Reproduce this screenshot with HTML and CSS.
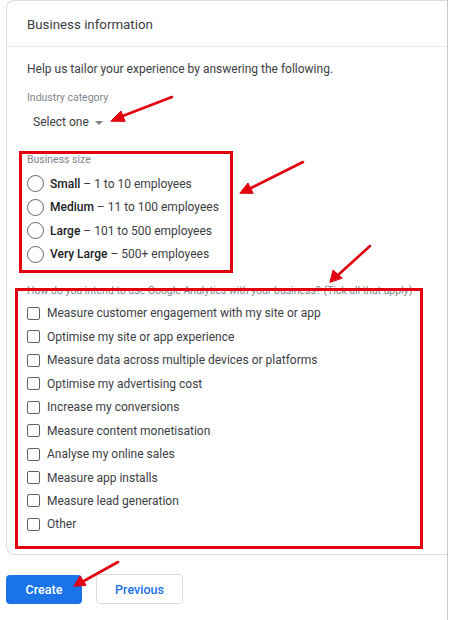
FILE: index.html
```html
<!DOCTYPE html>
<html>
<head>
<meta charset="utf-8">
<link rel="stylesheet" href="styles.css">
</head>
<body>
<div class="page">
  <div class="card">
    <div class="card-head">Business information</div>
    <div class="card-body">
      <p class="intro">Help us tailor your experience by answering the following.</p>
      <div class="field-label">Industry category</div>
      <div class="select">Select one <span class="caret"></span></div>

      <div class="field-label size-label">Business size</div>
      <div class="radios">
        <div class="opt"><span class="radio"></span><span><b>Small</b> – 1 to 10 employees</span></div>
        <div class="opt"><span class="radio"></span><span><b>Medium</b> – 11 to 100 employees</span></div>
        <div class="opt"><span class="radio"></span><span><b>Large</b> – 101 to 500 employees</span></div>
        <div class="opt"><span class="radio"></span><span><b>Very Large</b> – 500+ employees</span></div>
      </div>

      <div class="field-label use-label">How do you intend to use Google Analytics with your business? (Tick all that apply)</div>
      <div class="checks">
        <div class="opt"><span class="check"></span><span>Measure customer engagement with my site or app</span></div>
        <div class="opt"><span class="check"></span><span>Optimise my site or app experience</span></div>
        <div class="opt"><span class="check"></span><span>Measure data across multiple devices or platforms</span></div>
        <div class="opt"><span class="check"></span><span>Optimise my advertising cost</span></div>
        <div class="opt"><span class="check"></span><span>Increase my conversions</span></div>
        <div class="opt"><span class="check"></span><span>Measure content monetisation</span></div>
        <div class="opt"><span class="check"></span><span>Analyse my online sales</span></div>
        <div class="opt"><span class="check"></span><span>Measure app installs</span></div>
        <div class="opt"><span class="check"></span><span>Measure lead generation</span></div>
        <div class="opt"><span class="check"></span><span>Other</span></div>
      </div>
    </div>
  </div>
  <div class="actions">
    <button class="btn primary">Create</button>
    <button class="btn secondary">Previous</button>
  </div>

  <div class="hl hl-size"></div>
  <div class="hl hl-use"></div>
  <svg class="arrows" width="450" height="620" viewBox="0 0 450 620">
    <g stroke="#e3000f" stroke-width="2.6" stroke-linecap="round" fill="#e3000f">
      <line x1="172" y1="97" x2="120" y2="117"/>
      <polygon points="111,121 121,111 125,121" stroke-width="1"/>
      <line x1="303" y1="162" x2="249" y2="189"/>
      <polygon points="240,193 248,183 253,193" stroke-width="1"/>
      <line x1="370" y1="246" x2="337" y2="276"/>
      <polygon points="330,282 333,270 342,278" stroke-width="1"/>
      <line x1="118" y1="562" x2="82" y2="582"/>
      <polygon points="74,586 80,576 86,585" stroke-width="1"/>
    </g>
  </svg>
</div>
</body>
</html>
```

FILE: styles.css
```css
* { box-sizing: border-box; }
html, body { margin: 0; padding: 0; background: #fff; }
body {
  font-family: Roboto, "Liberation Sans", Arial, sans-serif;
  color: #3c4043;
}
.page {
  position: relative;
  width: 448px;
  height: 620px;
  border-right: 1px solid #c8c8c8;
  overflow: hidden;
}
.card {
  margin-left: 6px;
  border: 1px solid #dadce0;
  border-right: none;
  border-radius: 8px 0 0 8px;
  padding-bottom: 18px;
}
.card-head {
  height: 46px;
  padding: 2px 0 0 20px;
  display: flex;
  align-items: center;
  font-size: 13.3px;
  color: #3c4043;
  border-bottom: 1px solid #e6e6e6;
}
.card-body {
  padding: 12px 0 0 20px;
}
.intro {
  margin: 0;
  font-size: 12px;
  line-height: 20px;
}
.field-label {
  font-size: 10.5px;
  line-height: 16px;
  color: #80868b;
}
.intro + .field-label { margin-top: 11px; }
.select {
  margin-top: 6px;
  padding-left: 6px;
  font-size: 12px;
  line-height: 20px;
  color: #3c4043;
  display: flex;
  align-items: center;
  gap: 4px;
}
.caret {
  width: 0;
  height: 0;
  border-left: 4px solid transparent;
  border-right: 4px solid transparent;
  border-top: 4px solid #7d8187;
  margin: 2px 0 0 2px;
}
.size-label { margin-top: 20px; }
.radios { margin-top: 4px; }
.opt {
  display: flex;
  align-items: center;
  height: 23.45px;
  font-size: 12px;
  color: #3c4043;
}
.opt b { font-weight: 500; color: #202124; }
.radio {
  width: 17px;
  height: 17px;
  border: 1.8px solid #5f6368;
  border-radius: 50%;
  margin-right: 6px;
  flex: none;
}
.use-label { margin-top: 17px; }
.checks { margin-top: 3px; }
.check {
  width: 13px;
  height: 13px;
  border: 1.8px solid #5f6368;
  border-radius: 2px;
  margin-right: 7px;
  flex: none;
}
.actions {
  margin: 20px 0 0 6px;
  display: flex;
  gap: 14px;
}
.btn {
  font-family: Roboto, "Liberation Sans", Arial, sans-serif;
  font-size: 12.5px;
  font-weight: 500;
  height: 29px;
  border-radius: 4px;
  padding: 0;
  cursor: pointer;
}
.primary {
  width: 76px;
  background: #1a73e8;
  color: #fff;
  border: none;
}
.secondary {
  width: 87px;
  height: 30px;
  margin-top: -1px;
  background: #fff;
  color: #1a73e8;
  border: 1px solid #dadce0;
}
.hl {
  position: absolute;
  border: 3px solid #e3000f;
}
.hl-size { left: 19px; top: 151px; width: 214px; height: 122px; }
.hl-use { left: 15px; top: 288px; width: 408px; height: 261px; }
.arrows {
  position: absolute;
  left: 0;
  top: 0;
  pointer-events: none;
}
```
